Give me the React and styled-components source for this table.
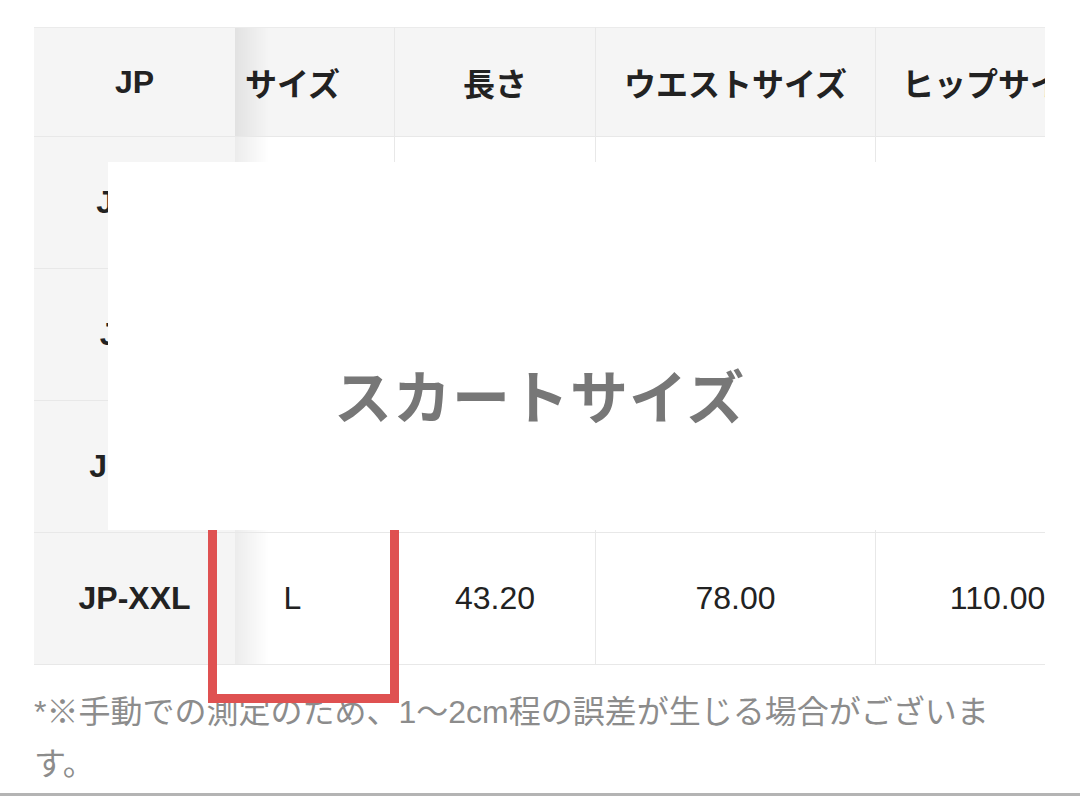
import { useLayoutEffect, useRef } from "react";
import styled, { createGlobalStyle } from "styled-components";

const GlobalStyle = createGlobalStyle`
  html, body {
    margin: 0;
    padding: 0;
    background: #ffffff;
  }
  body {
    font-family: "Liberation Sans", "Noto Sans CJK JP", sans-serif;
    color: #222222;
  }
`;

const Page = styled.div`
  position: relative;
  box-sizing: border-box;
  width: 1080px;
  height: 796px;
  padding: 27px 35px 0 34px;
  overflow: hidden;
`;

const Scroller = styled.div`
  width: 1011px;
  overflow-x: auto;
  scrollbar-width: none;
  &::-webkit-scrollbar {
    display: none;
  }
`;

const Table = styled.table`
  border-collapse: separate;
  border-spacing: 0;
  table-layout: fixed;
  width: 1130px;
`;

const HeadCell = styled.th`
  box-sizing: border-box;
  height: 110px;
  padding: 0;
  background: #f5f5f5;
  border-top: 1px solid #ebebeb;
  border-bottom: 1px solid #e8e8e8;
  border-right: 1px solid #e8e8e8;
  font-size: 32px;
  font-weight: 700;
  text-align: center;
  white-space: nowrap;
  color: #222;
  ${(p) => p.$sticky && `
    position: sticky;
    left: 0;
    z-index: 2;
    border-right: none;
  `}
`;

const Cell = styled.td`
  box-sizing: border-box;
  height: 132px;
  padding: 0;
  background: ${(p) => (p.$sticky ? "#f5f5f5" : "#ffffff")};
  border-bottom: 1px solid #e8e8e8;
  border-right: ${(p) => (p.$sticky ? "none" : "1px solid #e8e8e8")};
  font-size: 32px;
  font-weight: ${(p) => (p.$sticky ? 700 : 400)};
  text-align: center;
  white-space: nowrap;
  color: #222;
  ${(p) => p.$sticky && `
    position: sticky;
    left: 0;
    z-index: 2;
  `}
`;

const Shade = styled.span`
  position: absolute;
  top: 0;
  bottom: 0;
  left: 100%;
  width: 34px;
  background: linear-gradient(to right, rgba(0, 0, 0, 0.075), rgba(0, 0, 0, 0));
  pointer-events: none;
`;

const Note = styled.p`
  margin: 21px 0 0;
  width: 975px;
  font-size: 32px;
  line-height: 52px;
  color: #8c8c8c;
  font-weight: 400;
`;

const BottomRule = styled.div`
  position: absolute;
  left: 0;
  right: 0;
  bottom: 0;
  height: 3px;
  background: #b4b4b4;
`;

const Marker = styled.div`
  position: absolute;
  left: 208px;
  top: 500px;
  width: 191px;
  height: 203px;
  box-sizing: border-box;
  border: 9px solid #df5151;
  z-index: 5;
`;

const Cover = styled.div`
  position: absolute;
  left: 108px;
  right: 0;
  top: 162px;
  height: 368px;
  box-sizing: border-box;
  background: #ffffff;
  padding: 203px 0 0 226px;
  z-index: 6;
`;

const CoverTitle = styled.h2`
  margin: 0;
  font-family: "Noto Sans CJK JP", sans-serif;
  font-size: 58px;
  line-height: 1;
  font-weight: 700;
  color: #777777;
  letter-spacing: 1px;
`;

const columns = [
  { label: "JP", width: 201 },
  { label: "サイズ", width: 204 },
  { label: "長さ", width: 201 },
  { label: "ウエストサイズ", width: 280 },
  { label: "ヒップサイズ", width: 244 },
];

const rows = [
  ["JP-M", "XS", "41.80", "66.00", "98.00"],
  ["JP-L", "S", "42.30", "70.00", "102.00"],
  ["JP-XL", "M", "42.80", "74.00", "106.00"],
  ["JP-XXL", "L", "43.20", "78.00", "110.00"],
];

const App = () => {
  const scrollRef = useRef(null);

  useLayoutEffect(() => {
    if (scrollRef.current) scrollRef.current.scrollLeft = 44;
  }, []);

  return (
    <Page>
      <GlobalStyle />
      <Scroller ref={scrollRef}>
        <Table>
          <colgroup>
            {columns.map((c) => (
              <col key={c.label} style={{ width: c.width }} />
            ))}
          </colgroup>
          <thead>
            <tr>
              {columns.map((c, i) => (
                <HeadCell key={c.label} $sticky={i === 0}>
                  {c.label}
                  {i === 0 && <Shade />}
                </HeadCell>
              ))}
            </tr>
          </thead>
          <tbody>
            {rows.map((row) => (
              <tr key={row[0]}>
                {row.map((v, i) => (
                  <Cell key={i} $sticky={i === 0}>
                    {v}
                    {i === 0 && <Shade />}
                  </Cell>
                ))}
              </tr>
            ))}
          </tbody>
        </Table>
      </Scroller>
      <Note>*※手動での測定のため、1〜2cm程の誤差が生じる場合がございます。</Note>
      <Marker />
      <Cover>
        <CoverTitle>スカートサイズ</CoverTitle>
      </Cover>
      <BottomRule />
    </Page>
  );
};

export default App;
